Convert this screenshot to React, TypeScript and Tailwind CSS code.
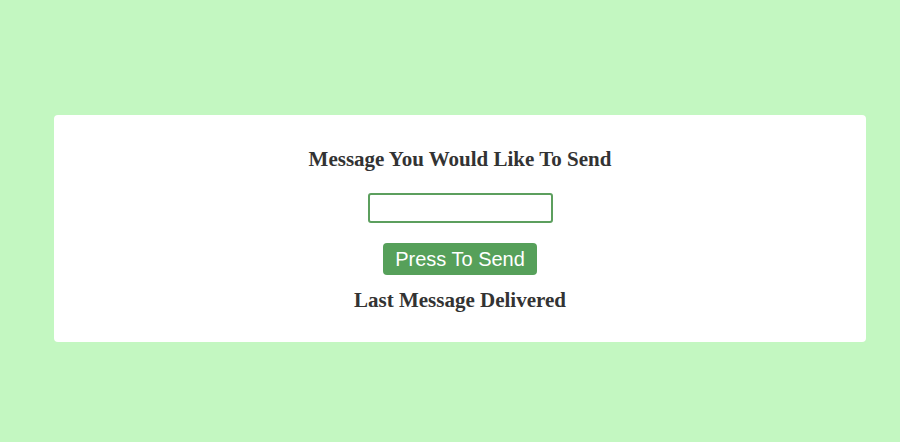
export default function App() {
  return (
    <main className="min-h-[442px] w-full bg-[#c3f7c1] pt-[115px] pl-[54px] pr-[34px]">
      <section className="flex h-[227px] flex-col items-center rounded bg-white pt-[31px]">
        <h2 className="shrink-0 text-[21px] font-bold leading-[26px] text-[#333] [font-family:'Liberation_Serif',serif]">
          Message You Would Like To Send
        </h2>
        <input
          type="text"
          className="mt-[21px] h-[30px] w-[185px] shrink-0 rounded-[3px] border-2 border-[#5c9f5e] bg-white outline-none"
        />
        <button className="mt-[20px] h-[32px] w-[154px] shrink-0 rounded-[4px] bg-[#56a05a] text-[20px] leading-[32px] text-white [font-family:'Liberation_Sans',Arial,sans-serif]">
          Press To Send
        </button>
        <h3 className="mt-[12px] shrink-0 text-[21px] font-bold leading-[26px] text-[#333] [font-family:'Liberation_Serif',serif]">
          Last Message Delivered
        </h3>
      </section>
    </main>
  );
}
